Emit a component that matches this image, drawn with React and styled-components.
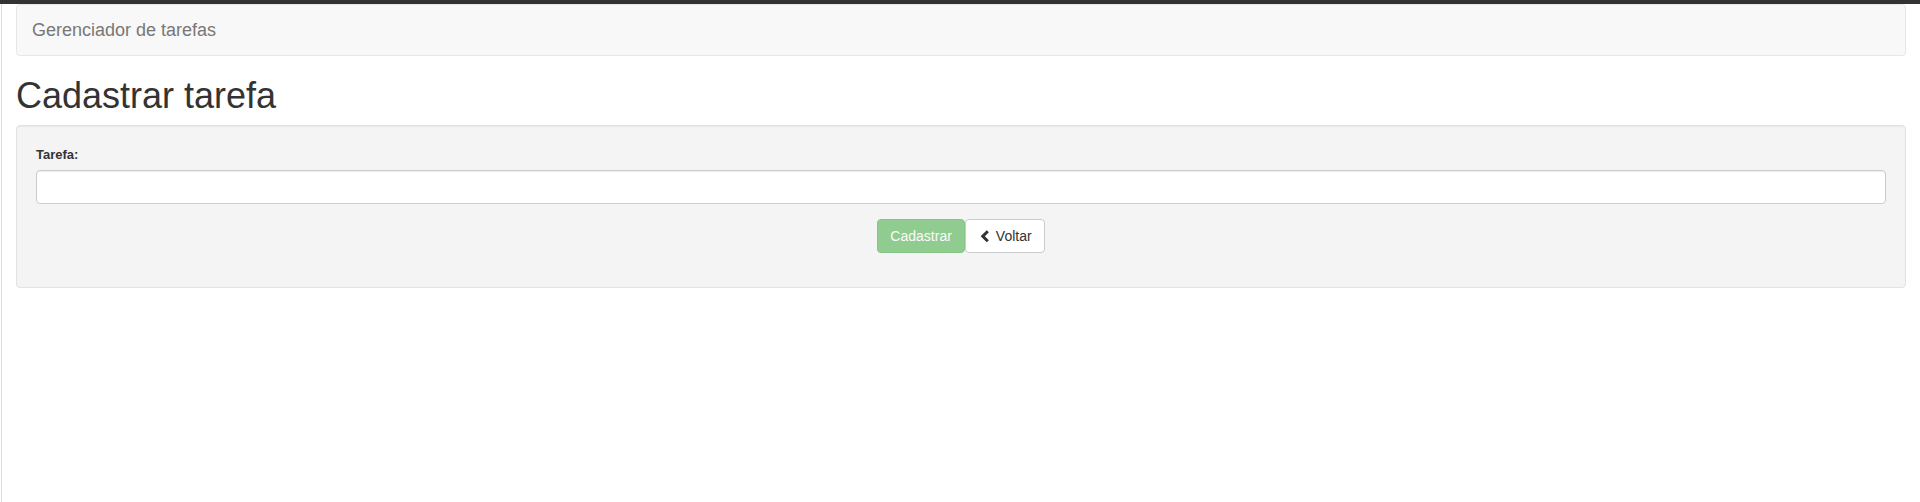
import React from 'react';
import styled, { createGlobalStyle } from 'styled-components';

const GlobalStyle = createGlobalStyle`
  html, body {
    margin: 0;
    padding: 0;
    background: #fff;
  }

  body {
    font-family: "Liberation Sans", Arial, sans-serif;
    font-size: 14px;
    line-height: 1.42857;
    color: #333;
  }

  * {
    box-sizing: border-box;
  }
`;

const TopBar = styled.div`
  height: 4px;
  background-color: #333;
`;

const Page = styled.div`
  margin-left: 1px;
  border-left: 1px solid #ddd;
  padding: 0 14px;
  min-height: 498px;
`;

const Navbar = styled.nav`
  display: flex;
  align-items: center;
  min-height: 52px;
  background-color: #f8f8f8;
  border: 1px solid #e7e7e7;
  border-radius: 4px;
`;

const Brand = styled.a`
  padding: 15px;
  font-size: 18px;
  line-height: 20px;
  color: #777;
  text-decoration: none;
`;

const Title = styled.h1`
  margin: 20px 0 10px;
  font-size: 36px;
  font-weight: 500;
  line-height: 39px;
  color: #333;
`;

const Well = styled.div`
  padding: 19px;
  margin-bottom: 20px;
  background-color: #f4f4f4;
  border: 1px solid #e3e3e3;
  border-radius: 4px;
  box-shadow: inset 0 1px 1px rgba(0, 0, 0, 0.05);
`;

const FormGroup = styled.div`
  margin-bottom: 15px;
  display: flex;
  flex-direction: column;
`;

const ButtonRow = styled.div`
  display: flex;
  justify-content: center;
`;

const Label = styled.label`
  display: block;
  margin-bottom: 5px;
  font-size: 13px;
  font-weight: 700;
  line-height: 20px;
  color: #333;
`;

const Input = styled.input`
  display: block;
  width: 100%;
  height: 34px;
  padding: 6px 12px;
  font-family: inherit;
  font-size: 14px;
  color: #555;
  background-color: #fff;
  border: 1px solid #ccc;
  border-radius: 4px;
  box-shadow: inset 0 1px 1px rgba(0, 0, 0, 0.075);
  outline: none;
`;

const Button = styled.button`
  display: inline-flex;
  align-items: center;
  height: 34px;
  padding: 6px 12px;
  font-family: inherit;
  font-size: 14px;
  line-height: 20px;
  border: 1px solid ${(p) => (p.$success ? '#4cae4c' : '#ccc')};
  border-radius: 4px;
  background-color: ${(p) => (p.$success ? '#5cb85c' : '#fff')};
  color: ${(p) => (p.$success ? '#fff' : '#333')};
  opacity: ${(p) => (p.disabled ? 0.65 : 1)};
  cursor: ${(p) => (p.disabled ? 'not-allowed' : 'pointer')};
`;

const Icon = styled.svg`
  width: 14px;
  height: 14px;
  margin-right: 4px;
`;

const ChevronLeft = () => (
  <Icon viewBox="0 0 14 14">
    <path
      d="M9.8 2.2 L4.8 7.2 L9.8 12.2"
      fill="none"
      stroke="#333"
      strokeWidth="3"
      strokeLinejoin="miter"
    />
  </Icon>
);

export default function App() {
  return (
    <>
      <GlobalStyle />
      <TopBar />
      <Page>
        <Navbar>
          <Brand href="#">Gerenciador de tarefas</Brand>
        </Navbar>

        <Title>Cadastrar tarefa</Title>

        <Well>
          <FormGroup>
            <Label htmlFor="tarefa">Tarefa:</Label>
            <Input id="tarefa" type="text" />
          </FormGroup>
          <FormGroup>
            <ButtonRow>
              <Button $success disabled>Cadastrar</Button>
              <Button>
                <ChevronLeft />
                Voltar
              </Button>
            </ButtonRow>
          </FormGroup>
        </Well>
      </Page>
    </>
  );
}
